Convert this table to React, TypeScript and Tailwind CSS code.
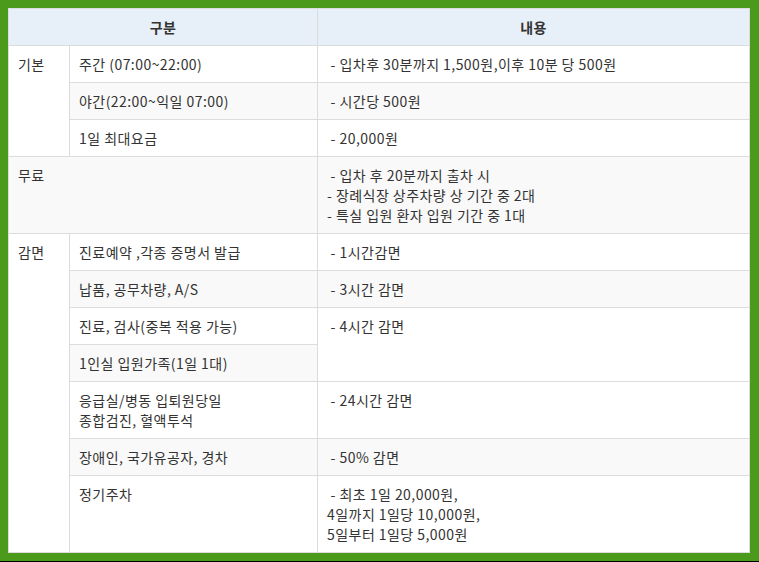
import React from "react";

const td = "border border-[#dcdcdc] px-[9px] py-2 align-top";

export default function App() {
  return (
    <div
      className="w-[759px] h-[562px] bg-[#4b9a1b] pt-2 pl-2 border-b border-black text-[14px] leading-5 tracking-[0.45px] text-[#333]"
      style={{ fontFamily: '"Noto Sans CJK KR", "Noto Sans", sans-serif' }}
    >
      <table className="w-[742px] table-fixed border-collapse bg-white">
        <colgroup>
          <col className="w-[61px]" />
          <col className="w-[248px]" />
          <col />
        </colgroup>
        <thead>
          <tr className="bg-[#e7eff8]">
            <th colSpan={2} className={`${td} font-semibold text-center`}>구분</th>
            <th className={`${td} font-semibold text-center`}>내용</th>
          </tr>
        </thead>
        <tbody>
          <tr>
            <td rowSpan={3} className={`${td} bg-white`}>기본</td>
            <td className={td}>주간 (07:00~22:00)</td>
            <td className={td}>&nbsp;- 입차후 30분까지 1,500원,이후 10분 당 500원</td>
          </tr>
          <tr className="bg-[#f9f9f9]">
            <td className={td}>야간(22:00~익일 07:00)</td>
            <td className={td}>&nbsp;- 시간당 500원</td>
          </tr>
          <tr>
            <td className={td}>1일 최대요금</td>
            <td className={td}>&nbsp;- 20,000원</td>
          </tr>
          <tr className="bg-[#f9f9f9]">
            <td colSpan={2} className={td}>무료</td>
            <td className={td}>
              &nbsp;- 입차 후 20분까지 출차 시<br />- 장례식장 상주차량 상 기간 중 2대<br />- 특실 입원 환자 입원 기간 중 1대
            </td>
          </tr>
          <tr>
            <td rowSpan={8} className={`${td} bg-white`}>감면</td>
            <td className={td}>진료예약 ,각종 증명서 발급</td>
            <td className={td}>&nbsp;- 1시간감면</td>
          </tr>
          <tr className="bg-[#f9f9f9]">
            <td className={td}>납품, 공무차량, A/S</td>
            <td className={td}>&nbsp;- 3시간 감면</td>
          </tr>
          <tr>
            <td className={td}>진료, 검사(중복 적용 가능)</td>
            <td rowSpan={2} className={`${td} bg-white`}>&nbsp;- 4시간 감면</td>
          </tr>
          <tr className="bg-[#f9f9f9]">
            <td className={td}>1인실 입원가족(1일 1대)</td>
          </tr>
          <tr>
            <td className={td}>
              응급실/병동 입퇴원당일<br />종합검진, 혈액투석
            </td>
            <td className={td}>&nbsp;- 24시간 감면</td>
          </tr>
          <tr className="bg-[#f9f9f9]">
            <td className={td}>장애인, 국가유공자, 경차</td>
            <td className={td}>&nbsp;- 50% 감면</td>
          </tr>
          <tr>
            <td className={td}>정기주차</td>
            <td className={td}>
              &nbsp;- 최초 1일 20,000원,<br />4일까지 1일당 10,000원,<br />5일부터 1일당 5,000원
            </td>
          </tr>
        </tbody>
      </table>
    </div>
  );
}
